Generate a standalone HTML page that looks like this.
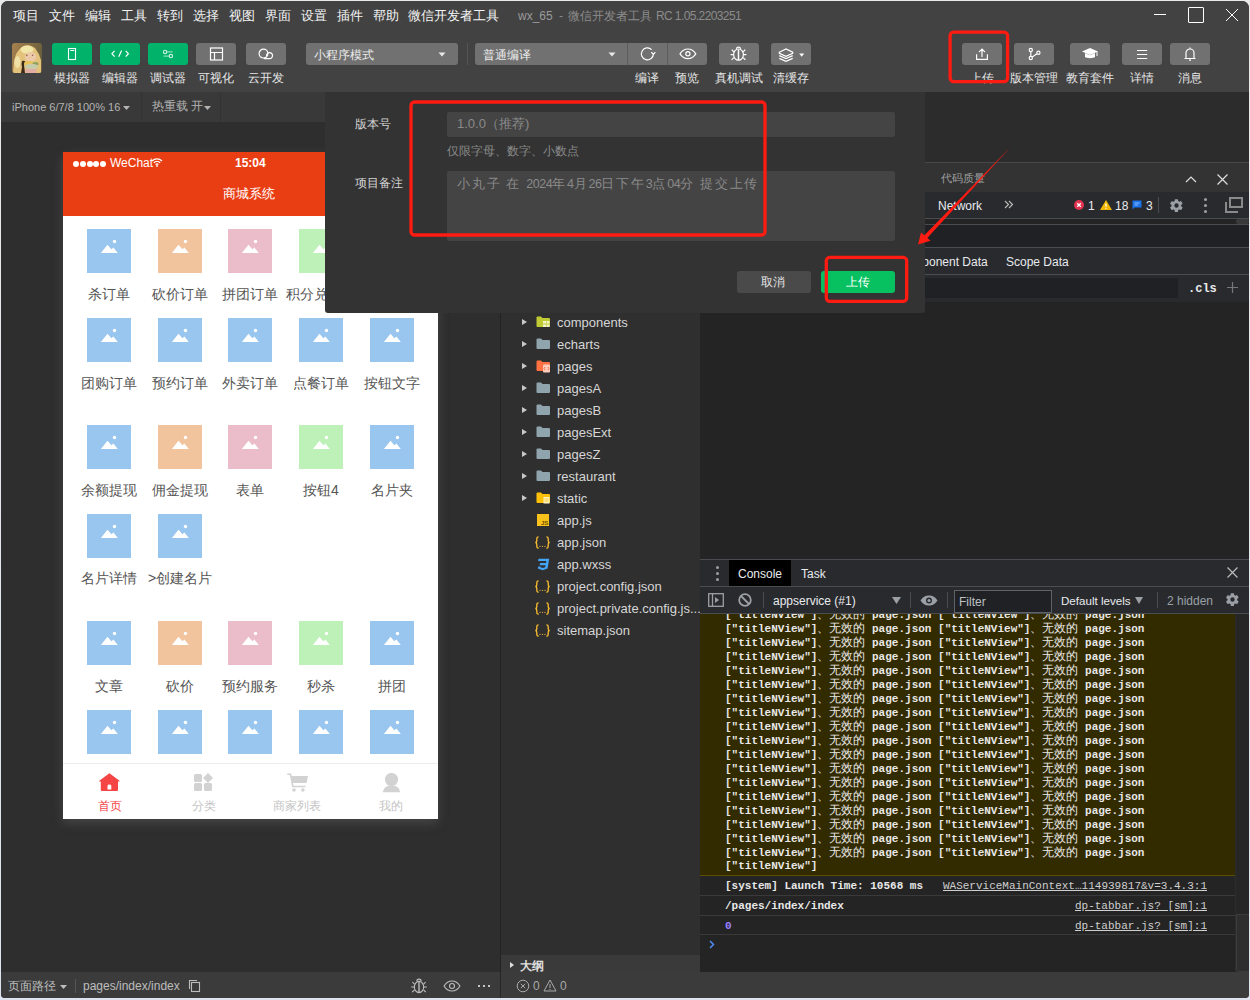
<!DOCTYPE html><html><head><meta charset="utf-8"><style>
*{box-sizing:border-box;margin:0;padding:0}
html,body{width:1250px;height:1000px;overflow:hidden;background:linear-gradient(#e9e9ea,#dde4ef);font-family:"Liberation Sans",sans-serif;}
#win{position:absolute;left:0;top:0;width:1250px;height:1000px;clip-path:inset(1px 1px 2px 1px round 7px 7px 4px 4px);background:#2e2e2e}
#win div,#win span,#win svg{position:absolute}
.t{white-space:nowrap;line-height:1}
.menu{font-size:13px;color:#f4f4f4;top:9px}
.tb{top:43px;height:22px;width:40px;border-radius:3px;background:#717171}
.tb.g{background:#01b26a}
.tb svg{left:0;top:0}
.lbl{top:71px;font-size:12px;color:#e6e6e6;white-space:nowrap;line-height:14px;text-align:center;width:80px}
.mono{font-family:"Liberation Mono",monospace}
.ic{width:44px;height:44px}
.ic svg{left:0;top:0}
.pl{font-size:14px;color:#555;width:90px;text-align:center;line-height:16px;white-space:nowrap}
.dl{font-size:12px;color:#e8eaed}
.sep{background:#494c50}
.ml{font-size:11px;font-weight:bold;color:#e8e8e8}
.cj{position:static!important;font-size:12px;font-weight:normal}
.cq{position:static!important;font-size:13px;letter-spacing:1.8px}
</style></head><body><div id="win">
<div style="left:0;top:0;width:1249px;height:92px;background:#424242"></div>
<div style="left:0;top:92px;width:500px;height:30px;background:#393939"></div>
<div style="left:141px;top:92px;width:1px;height:30px;background:#333"></div>
<div style="left:220px;top:92px;width:1px;height:30px;background:#333"></div>
<div style="left:0;top:122px;width:500px;height:850px;background:#2e2e2e"></div>
<div style="left:500px;top:92px;width:1px;height:906px;background:#232323"></div>
<div style="left:501px;top:92px;width:199px;height:880px;background:#2f2f2f"></div>
<div style="left:700px;top:92px;width:549px;height:880px;background:#242424"></div>
<div style="left:925px;top:92px;width:324px;height:70px;background:#2c2c2c"></div>
<div style="left:0;top:972px;width:1249px;height:26px;background:#3b3b3b"></div>
<div style="left:500px;top:972px;width:1px;height:26px;background:#262626"></div>
<span class="t menu" style="left:13px">项目</span>
<span class="t menu" style="left:49px">文件</span>
<span class="t menu" style="left:85px">编辑</span>
<span class="t menu" style="left:121px">工具</span>
<span class="t menu" style="left:157px">转到</span>
<span class="t menu" style="left:193px">选择</span>
<span class="t menu" style="left:229px">视图</span>
<span class="t menu" style="left:265px">界面</span>
<span class="t menu" style="left:301px">设置</span>
<span class="t menu" style="left:337px">插件</span>
<span class="t menu" style="left:373px">帮助</span>
<span class="t menu" style="left:408px">微信开发者工具</span>
<span class="t" style="left:518px;top:10px;font-size:12px;color:#9a9a9a">wx_65</span>
<span class="t" style="left:559px;top:10px;font-size:12px;color:#8c8c8c">-</span>
<span class="t" style="left:568px;top:10px;font-size:12px;color:#8c8c8c">微信开发者工具</span>
<span class="t" style="left:656px;top:10px;font-size:12px;letter-spacing:-0.6px;color:#8c8c8c">RC 1.05.2203251</span>
<div style="left:1154px;top:14px;width:12px;height:1px;background:#fff"></div>
<div style="left:1188px;top:7px;width:16px;height:16px;border:1.5px solid #fff;border-radius:1px"></div>
<svg style="left:1225px;top:8px" width="14" height="14" viewBox="0 0 14 14"><path d="M1 1L13 13M13 1L1 13" stroke="#fff" stroke-width="1"/></svg>
<svg style="left:12px;top:43px" width="30" height="30" viewBox="0 0 30 30"><defs><clipPath id="av"><rect width="30" height="30" rx="3"/></clipPath><linearGradient id="avbg" x1="0" y1="0" x2="1" y2="0.3"><stop offset="0" stop-color="#a8814f"/><stop offset="1" stop-color="#6a5f3c"/></linearGradient></defs><g clip-path="url(#av)"><rect width="30" height="30" fill="url(#avbg)"/><path d="M2 18Q4 8 10 4Q17 0 23 5Q27 10 29 17V30H1Z" fill="#e3c27c"/><ellipse cx="15" cy="6.5" rx="6.5" ry="4" fill="#f2e5a8"/><ellipse cx="5.5" cy="19" rx="3" ry="6" fill="#efe0a6"/><ellipse cx="18.5" cy="14" rx="5.8" ry="5" fill="#eccaa8"/><circle cx="14.8" cy="12.4" r="0.8" fill="#9a5d52"/><circle cx="20.6" cy="12.2" r="0.8" fill="#9a5d52"/><path d="M10 18Q13 17 14 20Q12 19 12 22L13 30H9L10 24Q9 21 10 18Z" fill="#3b2a1a"/><ellipse cx="17" cy="20.3" rx="4.8" ry="2.3" fill="#e8c35a"/><ellipse cx="23.5" cy="20.8" rx="3" ry="1.8" fill="#8ea15c"/><ellipse cx="19.5" cy="23.6" rx="6.5" ry="2.8" fill="#c6cca9"/><path d="M13 26H25L24 30H14Z" fill="#e1aca2"/></g></svg>
<div class="tb g" style="left:52px"><svg width="40" height="22" viewBox="0 0 40 22"><rect x="16.5" y="5.5" width="7" height="11" stroke="#fff" stroke-width="1.1" fill="none"/><path d="M18.3 7.5H22.3" stroke="#fff" stroke-width="1"/></svg></div>
<span class="lbl" style="left:32px">模拟器</span>
<div class="tb g" style="left:100px"><svg width="40" height="22" viewBox="0 0 40 22"><path d="M14.6 7.8L11.9 10.7L14.6 13.6M25.7 7.8L28.4 10.7L25.7 13.6M21.6 7.6L18.7 13.8" stroke="#fff" fill="none" stroke-width="1.2"/></svg></div>
<span class="lbl" style="left:80px">编辑器</span>
<div class="tb g" style="left:148px"><svg width="40" height="22" viewBox="0 0 40 22"><path d="M19 8.9H24.6M15.5 13.1H21" stroke="#fff" stroke-opacity=".55" stroke-width="1.3"/><circle cx="17.1" cy="8.9" r="1.7" stroke="#fff" stroke-opacity=".8" stroke-width="1.1" fill="none"/><circle cx="22.9" cy="13.1" r="1.7" stroke="#fff" stroke-opacity=".8" stroke-width="1.1" fill="none"/></svg></div>
<span class="lbl" style="left:128px">调试器</span>
<div class="tb " style="left:196px"><svg width="40" height="22" viewBox="0 0 40 22"><rect x="14.5" y="5" width="12" height="12" stroke="#fff" fill="none" stroke-width="1.2"/><path d="M14.5 9.5H26.5M18.5 9.5V17" stroke="#fff" fill="none" stroke-width="1.2"/></svg></div>
<span class="lbl" style="left:176px">可视化</span>
<div class="tb " style="left:246px"><svg width="40" height="22" viewBox="0 0 40 22"><circle cx="17.5" cy="10.6" r="4.4" stroke="#fff" fill="none" stroke-width="1.2"/><path d="M20.6 13.2A3 3 0 1 1 23 15.6H17.8" stroke="#fff" fill="none" stroke-width="1.2"/></svg></div>
<span class="lbl" style="left:226px">云开发</span>
<div style="left:306px;top:43px;width:152px;height:22px;border-radius:3px;background:#717171"></div>
<span class="t" style="left:314px;top:49px;font-size:12px;color:#ececec">小程序模式</span>
<svg style="left:438px;top:52px" width="8" height="5" viewBox="0 0 8 5"><path d="M0.5 0.5H7.5L4 4.5Z" fill="#e8e8e8"/></svg>
<div style="left:467px;top:43px;width:1px;height:22px;background:#555"></div>
<div style="left:475px;top:43px;width:232px;height:22px;border-radius:3px;background:#717171"></div>
<div style="left:627px;top:43px;width:1px;height:22px;background:#5c5c5c"></div>
<div style="left:667px;top:43px;width:1px;height:22px;background:#5c5c5c"></div>
<span class="t" style="left:483px;top:49px;font-size:12.2px;color:#ececec">普通编译</span>
<svg style="left:608px;top:52px" width="8" height="5" viewBox="0 0 8 5"><path d="M0.5 0.5H7.5L4 4.5Z" fill="#e8e8e8"/></svg>
<svg style="left:627px;top:43px" width="40" height="22" viewBox="0 0 40 22"><path d="M24.6 6.6A6 6 0 1 0 26.4 10.8" stroke="#fff" fill="none" stroke-width="1.2"/><path d="M24.3 9.3L26.4 11.3L28.3 9.1" stroke="#fff" fill="none" stroke-width="1.2"/></svg>
<svg style="left:667px;top:43px" width="40" height="22" viewBox="0 0 40 22"><path d="M13 10.8C15.2 7.4 18 6 20.9 6S26.6 7.4 28.8 10.8C26.6 14.2 23.8 15.6 20.9 15.6S15.2 14.2 13 10.8Z" stroke="#fff" fill="none" stroke-width="1.2"/><circle cx="20.9" cy="10.8" r="2.1" stroke="#fff" fill="none" stroke-width="1.2"/></svg>
<div class="tb" style="left:719px"><svg width="40" height="22" viewBox="0 0 40 22"><ellipse cx="19.5" cy="11.6" rx="4.9" ry="5.6" stroke="#fff" fill="none" stroke-width="1.2"/><path d="M17.3 5.8A2.3 2.3 0 0 1 21.7 5.8" stroke="#fff" fill="none" stroke-width="1.2"/><path d="M19.5 6.5V17.2" stroke="#fff" stroke-width="1.5"/><path d="M14.8 8.8L12.8 6.6M14.6 11.6H11.6M14.8 14.6L12.6 16.8M24.2 8.8L26.2 6.6M24.4 11.6H27.4M24.2 14.6L26.4 16.8" stroke="#fff" fill="none" stroke-width="1.2"/></svg></div>
<div class="tb" style="left:771px"><svg width="40" height="22" viewBox="0 0 40 22"><path d="M8.3 9.2L15 6L21.7 9.2V10.3L15 13.3L8.3 10.3Z" stroke="#fff" fill="none" stroke-width="1.2"/><path d="M8.3 12.6L15 15.6L21.7 12.6M8.3 15.4L15 18.4L21.7 15.4" stroke="#fff" fill="none" stroke-width="1.2"/><path d="M28.2 10.6H33.2L30.7 13.8Z" fill="#fff"/></svg></div>
<span class="lbl" style="left:607px">编译</span>
<span class="lbl" style="left:647px">预览</span>
<span class="lbl" style="left:699px">真机调试</span>
<span class="lbl" style="left:751px">清缓存</span>
<div class="tb" style="left:962px"><svg width="40" height="22" viewBox="0 0 40 22"><path d="M14.6 11.3V16.4H25.4V11.3M20 13.9V6.2M17 9.2L20 6.2L23 9.2" stroke="#fff" fill="none" stroke-width="1.2"/></svg></div>
<span class="lbl" style="left:942px">上传</span>
<div class="tb" style="left:1014px"><svg width="40" height="22" viewBox="0 0 40 22"><circle cx="16.8" cy="7" r="1.6" stroke="#fff" fill="none" stroke-width="1.2"/><circle cx="16.8" cy="15" r="1.6" stroke="#fff" fill="none" stroke-width="1.2"/><circle cx="24.4" cy="9.8" r="1.6" stroke="#fff" fill="none" stroke-width="1.2"/><path d="M16.8 8.6V13.4M23 10.7L18.2 14.1" stroke="#fff" fill="none" stroke-width="1.2"/></svg></div>
<span class="lbl" style="left:994px">版本管理</span>
<div class="tb" style="left:1070px"><svg width="40" height="22" viewBox="0 0 40 22"><path d="M20 5L28 8.5L20 12L12 8.5Z" fill="#fff"/><path d="M15 10V14C16.5 15.5 23.5 15.5 25 14V10L20 12.2Z" fill="#fff"/><path d="M27 9V13" stroke="#fff" stroke-width="1"/></svg></div>
<span class="lbl" style="left:1050px">教育套件</span>
<div class="tb" style="left:1122px"><svg width="40" height="22" viewBox="0 0 40 22"><path d="M15 7.5H25.2M15 11.5H25.2M15 15.5H25.2" stroke="#fff" stroke-width="1.1" fill="none"/></svg></div>
<span class="lbl" style="left:1102px">详情</span>
<div class="tb" style="left:1170px"><svg width="40" height="22" viewBox="0 0 40 22"><path d="M16 15V10A4 4 0 0 1 24 10V15M14.5 15.5H25.5" stroke="#fff" fill="none" stroke-width="1.2"/><path d="M19 17.2H21" stroke="#fff" fill="none" stroke-width="1.2"/><path d="M20 4.5V5.8" stroke="#fff" fill="none" stroke-width="1.2"/></svg></div>
<span class="lbl" style="left:1150px">消息</span>
<span class="t" style="left:12px;top:102px;font-size:11px;color:#b4b4b4">iPhone 6/7/8 100% 16</span>
<svg style="left:123px;top:106px" width="7" height="4" viewBox="0 0 7 4"><path d="M0 0H7L3.5 4Z" fill="#b4b4b4"/></svg>
<span class="t" style="left:152px;top:101px;font-size:11.5px;color:#b4b4b4">热重载 开</span>
<svg style="left:204px;top:106px" width="7" height="4" viewBox="0 0 7 4"><path d="M0 0H7L3.5 4Z" fill="#b4b4b4"/></svg>
<div style="left:63px;top:152px;width:375px;height:667px;background:#fff;box-shadow:0 4px 10px 0 rgba(110,110,110,.38)"></div>
<div style="left:63px;top:152px;width:375px;height:64px;background:#e93e14"></div>
<div style="left:73.0px;top:160.5px;width:6px;height:6px;border-radius:3px;background:#fff"></div>
<div style="left:79.8px;top:160.5px;width:6px;height:6px;border-radius:3px;background:#fff"></div>
<div style="left:86.6px;top:160.5px;width:6px;height:6px;border-radius:3px;background:#fff"></div>
<div style="left:93.4px;top:160.5px;width:6px;height:6px;border-radius:3px;background:#fff"></div>
<div style="left:100.2px;top:160.5px;width:6px;height:6px;border-radius:3px;background:#fff"></div>
<span class="t" style="left:110px;top:157px;font-size:12px;color:#fff">WeChat</span>
<svg style="left:151px;top:157px" width="12" height="10" viewBox="0 0 12 10"><path d="M1 4A7 7 0 0 1 11 4M2.8 5.8A4.5 4.5 0 0 1 9.2 5.8M4.6 7.6A2 2 0 0 1 7.4 7.6" stroke="#fff" stroke-width="1.3" fill="none"/><circle cx="6" cy="9" r="0.9" fill="#fff"/></svg>
<span class="t" style="left:235px;top:157px;font-size:12px;color:#fff;font-weight:bold">15:04</span>
<span class="t" style="left:223px;top:187px;font-size:13px;color:#fff">商城系统</span>
<div class="ic" style="left:87px;top:229px;background:#99c6ef"><svg width="44" height="44" viewBox="0 0 44 44"><path d="M13.9 24L20.5 15.8L24.4 20.2L26.4 18.5L30.8 24Z" fill="#fff"/><circle cx="27.5" cy="12.5" r="1.7" fill="#fff"/></svg></div>
<div class="ic" style="left:158px;top:229px;background:#f2c49d"><svg width="44" height="44" viewBox="0 0 44 44"><path d="M13.9 24L20.5 15.8L24.4 20.2L26.4 18.5L30.8 24Z" fill="#fff"/><circle cx="27.5" cy="12.5" r="1.7" fill="#fff"/></svg></div>
<div class="ic" style="left:228px;top:229px;background:#ebbcca"><svg width="44" height="44" viewBox="0 0 44 44"><path d="M13.9 24L20.5 15.8L24.4 20.2L26.4 18.5L30.8 24Z" fill="#fff"/><circle cx="27.5" cy="12.5" r="1.7" fill="#fff"/></svg></div>
<div class="ic" style="left:299px;top:229px;background:#bdf1b8"><svg width="44" height="44" viewBox="0 0 44 44"><path d="M13.9 24L20.5 15.8L24.4 20.2L26.4 18.5L30.8 24Z" fill="#fff"/><circle cx="27.5" cy="12.5" r="1.7" fill="#fff"/></svg></div>
<div class="ic" style="left:370px;top:229px;background:#99c6ef"><svg width="44" height="44" viewBox="0 0 44 44"><path d="M13.9 24L20.5 15.8L24.4 20.2L26.4 18.5L30.8 24Z" fill="#fff"/><circle cx="27.5" cy="12.5" r="1.7" fill="#fff"/></svg></div>
<span class="pl" style="left:64px;top:286px">杀订单</span>
<span class="pl" style="left:135px;top:286px">砍价订单</span>
<span class="pl" style="left:205px;top:286px">拼团订单</span>
<span class="pl" style="left:276px;top:286px">积分兑换单</span>
<div class="ic" style="left:87px;top:318px;background:#99c6ef"><svg width="44" height="44" viewBox="0 0 44 44"><path d="M13.9 24L20.5 15.8L24.4 20.2L26.4 18.5L30.8 24Z" fill="#fff"/><circle cx="27.5" cy="12.5" r="1.7" fill="#fff"/></svg></div>
<div class="ic" style="left:158px;top:318px;background:#99c6ef"><svg width="44" height="44" viewBox="0 0 44 44"><path d="M13.9 24L20.5 15.8L24.4 20.2L26.4 18.5L30.8 24Z" fill="#fff"/><circle cx="27.5" cy="12.5" r="1.7" fill="#fff"/></svg></div>
<div class="ic" style="left:228px;top:318px;background:#99c6ef"><svg width="44" height="44" viewBox="0 0 44 44"><path d="M13.9 24L20.5 15.8L24.4 20.2L26.4 18.5L30.8 24Z" fill="#fff"/><circle cx="27.5" cy="12.5" r="1.7" fill="#fff"/></svg></div>
<div class="ic" style="left:299px;top:318px;background:#99c6ef"><svg width="44" height="44" viewBox="0 0 44 44"><path d="M13.9 24L20.5 15.8L24.4 20.2L26.4 18.5L30.8 24Z" fill="#fff"/><circle cx="27.5" cy="12.5" r="1.7" fill="#fff"/></svg></div>
<div class="ic" style="left:370px;top:318px;background:#99c6ef"><svg width="44" height="44" viewBox="0 0 44 44"><path d="M13.9 24L20.5 15.8L24.4 20.2L26.4 18.5L30.8 24Z" fill="#fff"/><circle cx="27.5" cy="12.5" r="1.7" fill="#fff"/></svg></div>
<span class="pl" style="left:64px;top:375px">团购订单</span>
<span class="pl" style="left:135px;top:375px">预约订单</span>
<span class="pl" style="left:205px;top:375px">外卖订单</span>
<span class="pl" style="left:276px;top:375px">点餐订单</span>
<span class="pl" style="left:347px;top:375px">按钮文字</span>
<div class="ic" style="left:87px;top:425px;background:#99c6ef"><svg width="44" height="44" viewBox="0 0 44 44"><path d="M13.9 24L20.5 15.8L24.4 20.2L26.4 18.5L30.8 24Z" fill="#fff"/><circle cx="27.5" cy="12.5" r="1.7" fill="#fff"/></svg></div>
<div class="ic" style="left:158px;top:425px;background:#f2c49d"><svg width="44" height="44" viewBox="0 0 44 44"><path d="M13.9 24L20.5 15.8L24.4 20.2L26.4 18.5L30.8 24Z" fill="#fff"/><circle cx="27.5" cy="12.5" r="1.7" fill="#fff"/></svg></div>
<div class="ic" style="left:228px;top:425px;background:#ebbcca"><svg width="44" height="44" viewBox="0 0 44 44"><path d="M13.9 24L20.5 15.8L24.4 20.2L26.4 18.5L30.8 24Z" fill="#fff"/><circle cx="27.5" cy="12.5" r="1.7" fill="#fff"/></svg></div>
<div class="ic" style="left:299px;top:425px;background:#bdf1b8"><svg width="44" height="44" viewBox="0 0 44 44"><path d="M13.9 24L20.5 15.8L24.4 20.2L26.4 18.5L30.8 24Z" fill="#fff"/><circle cx="27.5" cy="12.5" r="1.7" fill="#fff"/></svg></div>
<div class="ic" style="left:370px;top:425px;background:#99c6ef"><svg width="44" height="44" viewBox="0 0 44 44"><path d="M13.9 24L20.5 15.8L24.4 20.2L26.4 18.5L30.8 24Z" fill="#fff"/><circle cx="27.5" cy="12.5" r="1.7" fill="#fff"/></svg></div>
<span class="pl" style="left:64px;top:482px">余额提现</span>
<span class="pl" style="left:135px;top:482px">佣金提现</span>
<span class="pl" style="left:205px;top:482px">表单</span>
<span class="pl" style="left:276px;top:482px">按钮4</span>
<span class="pl" style="left:347px;top:482px">名片夹</span>
<div class="ic" style="left:87px;top:514px;background:#99c6ef"><svg width="44" height="44" viewBox="0 0 44 44"><path d="M13.9 24L20.5 15.8L24.4 20.2L26.4 18.5L30.8 24Z" fill="#fff"/><circle cx="27.5" cy="12.5" r="1.7" fill="#fff"/></svg></div>
<div class="ic" style="left:158px;top:514px;background:#99c6ef"><svg width="44" height="44" viewBox="0 0 44 44"><path d="M13.9 24L20.5 15.8L24.4 20.2L26.4 18.5L30.8 24Z" fill="#fff"/><circle cx="27.5" cy="12.5" r="1.7" fill="#fff"/></svg></div>
<span class="pl" style="left:64px;top:570px">名片详情</span>
<span class="pl" style="left:135px;top:570px">>创建名片</span>
<div class="ic" style="left:87px;top:621px;background:#99c6ef"><svg width="44" height="44" viewBox="0 0 44 44"><path d="M13.9 24L20.5 15.8L24.4 20.2L26.4 18.5L30.8 24Z" fill="#fff"/><circle cx="27.5" cy="12.5" r="1.7" fill="#fff"/></svg></div>
<div class="ic" style="left:158px;top:621px;background:#f2c49d"><svg width="44" height="44" viewBox="0 0 44 44"><path d="M13.9 24L20.5 15.8L24.4 20.2L26.4 18.5L30.8 24Z" fill="#fff"/><circle cx="27.5" cy="12.5" r="1.7" fill="#fff"/></svg></div>
<div class="ic" style="left:228px;top:621px;background:#ebbcca"><svg width="44" height="44" viewBox="0 0 44 44"><path d="M13.9 24L20.5 15.8L24.4 20.2L26.4 18.5L30.8 24Z" fill="#fff"/><circle cx="27.5" cy="12.5" r="1.7" fill="#fff"/></svg></div>
<div class="ic" style="left:299px;top:621px;background:#bdf1b8"><svg width="44" height="44" viewBox="0 0 44 44"><path d="M13.9 24L20.5 15.8L24.4 20.2L26.4 18.5L30.8 24Z" fill="#fff"/><circle cx="27.5" cy="12.5" r="1.7" fill="#fff"/></svg></div>
<div class="ic" style="left:370px;top:621px;background:#99c6ef"><svg width="44" height="44" viewBox="0 0 44 44"><path d="M13.9 24L20.5 15.8L24.4 20.2L26.4 18.5L30.8 24Z" fill="#fff"/><circle cx="27.5" cy="12.5" r="1.7" fill="#fff"/></svg></div>
<span class="pl" style="left:64px;top:678px">文章</span>
<span class="pl" style="left:135px;top:678px">砍价</span>
<span class="pl" style="left:205px;top:678px">预约服务</span>
<span class="pl" style="left:276px;top:678px">秒杀</span>
<span class="pl" style="left:347px;top:678px">拼团</span>
<div class="ic" style="left:87px;top:710px;background:#99c6ef"><svg width="44" height="44" viewBox="0 0 44 44"><path d="M13.9 24L20.5 15.8L24.4 20.2L26.4 18.5L30.8 24Z" fill="#fff"/><circle cx="27.5" cy="12.5" r="1.7" fill="#fff"/></svg></div>
<div class="ic" style="left:158px;top:710px;background:#99c6ef"><svg width="44" height="44" viewBox="0 0 44 44"><path d="M13.9 24L20.5 15.8L24.4 20.2L26.4 18.5L30.8 24Z" fill="#fff"/><circle cx="27.5" cy="12.5" r="1.7" fill="#fff"/></svg></div>
<div class="ic" style="left:228px;top:710px;background:#99c6ef"><svg width="44" height="44" viewBox="0 0 44 44"><path d="M13.9 24L20.5 15.8L24.4 20.2L26.4 18.5L30.8 24Z" fill="#fff"/><circle cx="27.5" cy="12.5" r="1.7" fill="#fff"/></svg></div>
<div class="ic" style="left:299px;top:710px;background:#99c6ef"><svg width="44" height="44" viewBox="0 0 44 44"><path d="M13.9 24L20.5 15.8L24.4 20.2L26.4 18.5L30.8 24Z" fill="#fff"/><circle cx="27.5" cy="12.5" r="1.7" fill="#fff"/></svg></div>
<div class="ic" style="left:370px;top:710px;background:#99c6ef"><svg width="44" height="44" viewBox="0 0 44 44"><path d="M13.9 24L20.5 15.8L24.4 20.2L26.4 18.5L30.8 24Z" fill="#fff"/><circle cx="27.5" cy="12.5" r="1.7" fill="#fff"/></svg></div>
<div style="left:63px;top:763px;width:375px;height:1px;background:#ececec"></div>
<span class="t" style="left:70px;top:800px;width:80px;text-align:center;font-size:12px;color:#f54545">首页</span>
<svg style="left:99px;top:773px" width="22" height="20" viewBox="0 0 22 20"><path d="M10.4 0.3L20.5 7.8Q20.9 8.4 20.2 8.6H19V17Q19 18 18 18H2.8Q1.8 18 1.8 17V8.6H0.6Q-0.1 8.4 0.3 7.8Z" fill="#f54545"/><path d="M8.5 16.6V13Q8.5 11.6 10.4 11.6Q12.3 11.6 12.3 13V16.6Z" fill="#fff"/></svg>
<span class="t" style="left:164px;top:800px;width:80px;text-align:center;font-size:12px;color:#c4c4c4">分类</span>
<svg style="left:194px;top:773px" width="22" height="20" viewBox="0 0 22 20"><rect x="0" y="1" width="8" height="8" rx="1.5" fill="#d2d2d2"/><rect x="0" y="10" width="8" height="8" rx="1.5" fill="#d2d2d2"/><rect x="10" y="10" width="8" height="8" rx="1.5" fill="#d2d2d2"/><path d="M14 0L19 5L14 10L9 5Z" fill="#d2d2d2"/></svg>
<span class="t" style="left:257px;top:800px;width:80px;text-align:center;font-size:12px;color:#c4c4c4">商家列表</span>
<svg style="left:287px;top:773px" width="22" height="20" viewBox="0 0 22 20"><path d="M0.3 1.3H3.6L5.8 13.5H18.5" stroke="#d2d2d2" stroke-width="1.6" fill="none"/><path d="M3.6 3.1H21L19.6 10.1H4.9Z" fill="#d2d2d2"/><circle cx="7" cy="17" r="1.8" fill="#d2d2d2"/><circle cx="15.9" cy="17" r="1.8" fill="#d2d2d2"/></svg>
<span class="t" style="left:351px;top:800px;width:80px;text-align:center;font-size:12px;color:#c4c4c4">我的</span>
<svg style="left:382px;top:773px" width="22" height="20" viewBox="0 0 22 20"><circle cx="9.5" cy="6.5" r="6.6" fill="#d2d2d2"/><path d="M0.8 19.2Q1.5 12.4 9.5 12.4Q17.5 12.4 18.2 19.2Z" fill="#d2d2d2"/></svg>
<span class="t" style="left:8px;top:980px;font-size:12px;color:#bdbdbd">页面路径</span>
<svg style="left:60px;top:985px" width="7" height="4" viewBox="0 0 7 4"><path d="M0 0H7L3.5 4Z" fill="#bdbdbd"/></svg>
<div style="left:75px;top:979px;width:1px;height:14px;background:#555"></div>
<span class="t" style="left:83px;top:980px;font-size:12px;color:#bdbdbd">pages/index/index</span>
<svg style="left:186px;top:978px" width="16" height="16" viewBox="0 0 16 16"><rect x="5.5" y="4.5" width="8" height="9" stroke="#bdbdbd" fill="none" stroke-width="1.1"/><path d="M3.5 11V2.5H11" stroke="#bdbdbd" fill="none" stroke-width="1.1"/></svg>
<svg style="left:409px;top:976px" width="20" height="20" viewBox="0 0 20 20"><ellipse cx="10" cy="11" rx="4.7" ry="5.6" stroke="#bdbdbd" fill="none" stroke-width="1.1"/><path d="M7.8 5.3A2.2 2.2 0 0 1 12.2 5.3" stroke="#bdbdbd" fill="none" stroke-width="1.1"/><path d="M10 6V16.6" stroke="#bdbdbd" stroke-width="1.4"/><path d="M5.4 8.2L3.4 6M5.2 11H2.2M5.4 14L3.2 16.2M14.6 8.2L16.6 6M14.8 11H17.8M14.6 14L16.8 16.2" stroke="#bdbdbd" fill="none" stroke-width="1.1"/></svg>
<svg style="left:443px;top:980px" width="18" height="12" viewBox="0 0 18 12"><path d="M1 6C3.5 2 6.5 1 9 1S14.5 2 17 6C14.5 10 11.5 11 9 11S3.5 10 1 6Z" stroke="#bdbdbd" fill="none" stroke-width="1.1"/><circle cx="9" cy="6" r="2.5" stroke="#bdbdbd" fill="none" stroke-width="1.1"/></svg>
<div style="left:478px;top:985px;width:2px;height:2px;background:#c4c4c4"></div>
<div style="left:483px;top:985px;width:2px;height:2px;background:#c4c4c4"></div>
<div style="left:488px;top:985px;width:2px;height:2px;background:#c4c4c4"></div>
<svg style="left:522px;top:319px" width="5" height="6" viewBox="0 0 5 6"><path d="M0 0L5 3L0 6Z" fill="#c8c8c8"/></svg>
<svg style="left:536px;top:316px" width="15" height="13" viewBox="0 0 15 13"><path d="M0.5 1.5Q0.5 0.5 1.5 0.5H5L6.5 2H13Q14 2 14 3V10Q14 11 13 11H1.5Q0.5 11 0.5 10Z" fill="#c0ca33"/><rect x="7" y="5" width="3" height="2.5" fill="#f0f4c3"/><rect x="10.5" y="5" width="3" height="2.5" fill="#f0f4c3"/><rect x="7" y="8.5" width="3" height="2.5" fill="#f0f4c3"/><rect x="10.5" y="8.5" width="3" height="2.5" fill="#f0f4c3"/></svg>
<span class="t" style="left:557px;top:316px;font-size:13px;color:#d6d6d6">components</span>
<svg style="left:522px;top:341px" width="5" height="6" viewBox="0 0 5 6"><path d="M0 0L5 3L0 6Z" fill="#c8c8c8"/></svg>
<svg style="left:536px;top:338px" width="15" height="13" viewBox="0 0 15 13"><path d="M0.5 1.5Q0.5 0.5 1.5 0.5H5L6.5 2H13Q14 2 14 3V10Q14 11 13 11H1.5Q0.5 11 0.5 10Z" fill="#90a4ae"/></svg>
<span class="t" style="left:557px;top:338px;font-size:13px;color:#d6d6d6">echarts</span>
<svg style="left:522px;top:363px" width="5" height="6" viewBox="0 0 5 6"><path d="M0 0L5 3L0 6Z" fill="#c8c8c8"/></svg>
<svg style="left:536px;top:360px" width="15" height="13" viewBox="0 0 15 13"><path d="M0.5 1.5Q0.5 0.5 1.5 0.5H5L6.5 2H13Q14 2 14 3V10Q14 11 13 11H1.5Q0.5 11 0.5 10Z" fill="#ff7043"/><rect x="7" y="4.5" width="7" height="8" rx="1" fill="#ffccbc"/><path d="M9 7L8 8.5L9 10M12 7L13 8.5L12 10" stroke="#ff5722" stroke-width="0.8" fill="none"/></svg>
<span class="t" style="left:557px;top:360px;font-size:13px;color:#d6d6d6">pages</span>
<svg style="left:522px;top:385px" width="5" height="6" viewBox="0 0 5 6"><path d="M0 0L5 3L0 6Z" fill="#c8c8c8"/></svg>
<svg style="left:536px;top:382px" width="15" height="13" viewBox="0 0 15 13"><path d="M0.5 1.5Q0.5 0.5 1.5 0.5H5L6.5 2H13Q14 2 14 3V10Q14 11 13 11H1.5Q0.5 11 0.5 10Z" fill="#90a4ae"/></svg>
<span class="t" style="left:557px;top:382px;font-size:13px;color:#d6d6d6">pagesA</span>
<svg style="left:522px;top:407px" width="5" height="6" viewBox="0 0 5 6"><path d="M0 0L5 3L0 6Z" fill="#c8c8c8"/></svg>
<svg style="left:536px;top:404px" width="15" height="13" viewBox="0 0 15 13"><path d="M0.5 1.5Q0.5 0.5 1.5 0.5H5L6.5 2H13Q14 2 14 3V10Q14 11 13 11H1.5Q0.5 11 0.5 10Z" fill="#90a4ae"/></svg>
<span class="t" style="left:557px;top:404px;font-size:13px;color:#d6d6d6">pagesB</span>
<svg style="left:522px;top:429px" width="5" height="6" viewBox="0 0 5 6"><path d="M0 0L5 3L0 6Z" fill="#c8c8c8"/></svg>
<svg style="left:536px;top:426px" width="15" height="13" viewBox="0 0 15 13"><path d="M0.5 1.5Q0.5 0.5 1.5 0.5H5L6.5 2H13Q14 2 14 3V10Q14 11 13 11H1.5Q0.5 11 0.5 10Z" fill="#90a4ae"/></svg>
<span class="t" style="left:557px;top:426px;font-size:13px;color:#d6d6d6">pagesExt</span>
<svg style="left:522px;top:451px" width="5" height="6" viewBox="0 0 5 6"><path d="M0 0L5 3L0 6Z" fill="#c8c8c8"/></svg>
<svg style="left:536px;top:448px" width="15" height="13" viewBox="0 0 15 13"><path d="M0.5 1.5Q0.5 0.5 1.5 0.5H5L6.5 2H13Q14 2 14 3V10Q14 11 13 11H1.5Q0.5 11 0.5 10Z" fill="#90a4ae"/></svg>
<span class="t" style="left:557px;top:448px;font-size:13px;color:#d6d6d6">pagesZ</span>
<svg style="left:522px;top:473px" width="5" height="6" viewBox="0 0 5 6"><path d="M0 0L5 3L0 6Z" fill="#c8c8c8"/></svg>
<svg style="left:536px;top:470px" width="15" height="13" viewBox="0 0 15 13"><path d="M0.5 1.5Q0.5 0.5 1.5 0.5H5L6.5 2H13Q14 2 14 3V10Q14 11 13 11H1.5Q0.5 11 0.5 10Z" fill="#90a4ae"/></svg>
<span class="t" style="left:557px;top:470px;font-size:13px;color:#d6d6d6">restaurant</span>
<svg style="left:522px;top:495px" width="5" height="6" viewBox="0 0 5 6"><path d="M0 0L5 3L0 6Z" fill="#c8c8c8"/></svg>
<svg style="left:536px;top:492px" width="15" height="13" viewBox="0 0 15 13"><path d="M0.5 1.5Q0.5 0.5 1.5 0.5H5L6.5 2H13Q14 2 14 3V10Q14 11 13 11H1.5Q0.5 11 0.5 10Z" fill="#ffc107"/><rect x="7.5" y="5" width="6" height="6.5" fill="#fff3c4"/><path d="M8.5 7H12.5M8.5 9H12.5" stroke="#ffc107" stroke-width="0.8"/></svg>
<span class="t" style="left:557px;top:492px;font-size:13px;color:#d6d6d6">static</span>
<svg style="left:536px;top:514px" width="15" height="13" viewBox="0 0 15 13"><rect x="1" y="0" width="12" height="12" fill="#f9c21b"/><text x="5" y="10.5" font-size="6" font-family="Liberation Sans" font-weight="bold" fill="#6b4e00">JS</text></svg>
<span class="t" style="left:557px;top:514px;font-size:13px;color:#d6d6d6">app.js</span>
<svg style="left:535px;top:536px" width="15" height="13" viewBox="0 0 15 13"><path d="M3.6 0.8Q1.8 0.8 1.8 2.6V4.8Q1.8 6.5 0.3 6.5Q1.8 6.5 1.8 8.2V10.4Q1.8 12.2 3.6 12.2M11.4 0.8Q13.2 0.8 13.2 2.6V4.8Q13.2 6.5 14.7 6.5Q13.2 6.5 13.2 8.2V10.4Q13.2 12.2 11.4 12.2" stroke="#f7bb2f" stroke-width="1.35" fill="none"/><circle cx="5" cy="10.3" r="0.65" fill="#f4b83f"/><circle cx="7.5" cy="10.3" r="0.65" fill="#f4b83f"/><circle cx="10" cy="10.3" r="0.65" fill="#f4b83f"/></svg>
<span class="t" style="left:557px;top:536px;font-size:13px;color:#d6d6d6">app.json</span>
<svg style="left:536px;top:558px" width="15" height="13" viewBox="0 0 15 13"><path d="M2.5 0.8H13.2L11.6 10.6L6.6 12.2L1.8 10.6L2.2 8.4H4.6L4.5 9.3L6.7 10L9.2 9.3L9.6 7.3H3.7L4.1 5.1H10L10.3 3H2.1Z" fill="#42a5f5"/></svg>
<span class="t" style="left:557px;top:558px;font-size:13px;color:#d6d6d6">app.wxss</span>
<svg style="left:535px;top:580px" width="15" height="13" viewBox="0 0 15 13"><path d="M3.6 0.8Q1.8 0.8 1.8 2.6V4.8Q1.8 6.5 0.3 6.5Q1.8 6.5 1.8 8.2V10.4Q1.8 12.2 3.6 12.2M11.4 0.8Q13.2 0.8 13.2 2.6V4.8Q13.2 6.5 14.7 6.5Q13.2 6.5 13.2 8.2V10.4Q13.2 12.2 11.4 12.2" stroke="#f7bb2f" stroke-width="1.35" fill="none"/><circle cx="5" cy="10.3" r="0.65" fill="#f4b83f"/><circle cx="7.5" cy="10.3" r="0.65" fill="#f4b83f"/><circle cx="10" cy="10.3" r="0.65" fill="#f4b83f"/></svg>
<span class="t" style="left:557px;top:580px;font-size:13px;color:#d6d6d6">project.config.json</span>
<svg style="left:535px;top:602px" width="15" height="13" viewBox="0 0 15 13"><path d="M3.6 0.8Q1.8 0.8 1.8 2.6V4.8Q1.8 6.5 0.3 6.5Q1.8 6.5 1.8 8.2V10.4Q1.8 12.2 3.6 12.2M11.4 0.8Q13.2 0.8 13.2 2.6V4.8Q13.2 6.5 14.7 6.5Q13.2 6.5 13.2 8.2V10.4Q13.2 12.2 11.4 12.2" stroke="#f7bb2f" stroke-width="1.35" fill="none"/><circle cx="5" cy="10.3" r="0.65" fill="#f4b83f"/><circle cx="7.5" cy="10.3" r="0.65" fill="#f4b83f"/><circle cx="10" cy="10.3" r="0.65" fill="#f4b83f"/></svg>
<span class="t" style="left:557px;top:602px;font-size:13px;color:#d6d6d6">project.private.config.js...</span>
<svg style="left:535px;top:624px" width="15" height="13" viewBox="0 0 15 13"><path d="M3.6 0.8Q1.8 0.8 1.8 2.6V4.8Q1.8 6.5 0.3 6.5Q1.8 6.5 1.8 8.2V10.4Q1.8 12.2 3.6 12.2M11.4 0.8Q13.2 0.8 13.2 2.6V4.8Q13.2 6.5 14.7 6.5Q13.2 6.5 13.2 8.2V10.4Q13.2 12.2 11.4 12.2" stroke="#f7bb2f" stroke-width="1.35" fill="none"/><circle cx="5" cy="10.3" r="0.65" fill="#f4b83f"/><circle cx="7.5" cy="10.3" r="0.65" fill="#f4b83f"/><circle cx="10" cy="10.3" r="0.65" fill="#f4b83f"/></svg>
<span class="t" style="left:557px;top:624px;font-size:13px;color:#d6d6d6">sitemap.json</span>
<div style="left:501px;top:955px;width:199px;height:17px;background:#3a3a3a"></div>
<svg style="left:510px;top:962px" width="4" height="6" viewBox="0 0 4 6"><path d="M0 0L4 3L0 6Z" fill="#ddd"/></svg>
<span class="t" style="left:520px;top:960px;font-size:12px;color:#e0e0e0;font-weight:bold">大纲</span>
<svg style="left:516px;top:979px" width="14" height="14" viewBox="0 0 14 14"><circle cx="7" cy="7" r="5.8" stroke="#aaa" fill="none" stroke-width="1"/><path d="M4.8 4.8L9.2 9.2M9.2 4.8L4.8 9.2" stroke="#aaa" fill="none" stroke-width="1"/></svg>
<span class="t" style="left:533px;top:980px;font-size:12px;color:#aaa">0</span>
<svg style="left:543px;top:979px" width="14" height="13" viewBox="0 0 14 13"><path d="M7 1L13 12H1Z" stroke="#aaa" fill="none" stroke-width="1"/><path d="M7 5V9M7 10V11" stroke="#aaa" fill="none" stroke-width="1"/></svg>
<span class="t" style="left:560px;top:980px;font-size:12px;color:#aaa">0</span>
<div style="left:925px;top:162px;width:324px;height:1px;background:#484848"></div>
<div style="left:925px;top:163px;width:324px;height:29px;background:#333"></div>
<span class="t" style="left:941px;top:173px;font-size:11px;color:#a0a0a0">代码质量</span>
<svg style="left:1185px;top:175px" width="12" height="8" viewBox="0 0 12 8"><path d="M1 7L6 2L11 7" stroke="#ddd" stroke-width="1.2" fill="none"/></svg>
<svg style="left:1217px;top:174px" width="11" height="11" viewBox="0 0 11 11"><path d="M0.5 0.5L10.5 10.5M10.5 0.5L0.5 10.5" stroke="#ddd" stroke-width="1.2"/></svg>
<div style="left:925px;top:192px;width:324px;height:26px;background:#292a2d"></div>
<span class="t dl" style="left:938px;top:200px">Network</span>
<svg style="left:1004px;top:200px" width="10" height="9" viewBox="0 0 10 9"><path d="M1 1L4.5 4.5L1 8M5 1L8.5 4.5L5 8" stroke="#bbb" stroke-width="1.1" fill="none"/></svg>
<svg style="left:1074px;top:200px" width="10" height="10" viewBox="0 0 10 10"><circle cx="5" cy="5" r="5" fill="#e0334f"/><path d="M3.2 3.2L6.8 6.8M6.8 3.2L3.2 6.8" stroke="#fff" stroke-width="1.3"/></svg>
<span class="t dl" style="left:1088px;top:200px">1</span>
<svg style="left:1100px;top:200px" width="12" height="10" viewBox="0 0 12 10"><path d="M6 0L12 10H0Z" fill="#f2b800"/><path d="M6 3.5V6.8M6 7.8V8.8" stroke="#fff" stroke-width="1.2"/></svg>
<span class="t dl" style="left:1115px;top:200px">18</span>
<svg style="left:1132px;top:200px" width="10" height="10" viewBox="0 0 10 10"><path d="M0.5 0.5H9.5V7.5H2.5L0.5 9.5Z" fill="#1a73e8"/><path d="M2.5 3H7.5M2.5 5H6" stroke="#9cc2ff" stroke-width="0.9"/></svg>
<span class="t dl" style="left:1146px;top:200px">3</span>
<div style="left:1158px;top:197px;width:1px;height:16px;background:#494c50"></div>
<svg style="left:1169px;top:198px" width="15" height="15" viewBox="0 0 24 24"><path fill="#9aa0a6" d="M19.4 13c.04-.32.06-.66.06-1s-.02-.68-.07-1l2.16-1.68a.5.5 0 0 0 .12-.64l-2.05-3.55a.5.5 0 0 0-.62-.22l-2.55 1.03a7.7 7.7 0 0 0-1.73-1L14.34 2.4a.5.5 0 0 0-.5-.4H9.74a.5.5 0 0 0-.5.42L8.86 5.14c-.63.26-1.2.6-1.73 1L4.58 5.1a.5.5 0 0 0-.62.22L1.9 8.87a.5.5 0 0 0 .12.64L4.18 11.2c-.05.32-.08.66-.08 1s.03.68.08 1l-2.16 1.68a.5.5 0 0 0-.12.64l2.05 3.55c.13.22.39.3.62.22l2.55-1.03c.53.4 1.1.74 1.73 1l.38 2.72c.05.24.26.42.5.42h4.1c.25 0 .46-.18.5-.42l.38-2.72c.63-.26 1.2-.6 1.73-1l2.55 1.03c.23.09.49 0 .62-.22l2.05-3.55a.5.5 0 0 0-.12-.64zM12 15.5A3.5 3.5 0 1 1 12 8.5a3.5 3.5 0 0 1 0 7z"/></svg>
<div style="left:1204px;top:197.5px;width:3px;height:3px;border-radius:2px;background:#9aa0a6"></div>
<div style="left:1204px;top:203.5px;width:3px;height:3px;border-radius:2px;background:#9aa0a6"></div>
<div style="left:1204px;top:209.5px;width:3px;height:3px;border-radius:2px;background:#9aa0a6"></div>
<svg style="left:1224px;top:197px" width="19" height="17" viewBox="0 0 19 17"><rect x="6" y="1" width="12" height="9" stroke="#8a8a8a" stroke-width="2" fill="none"/><path d="M2 5V15H14" stroke="#8a8a8a" stroke-width="2" fill="none"/></svg>
<div style="left:925px;top:218px;width:324px;height:1px;background:#494c50"></div>
<div style="left:925px;top:219px;width:324px;height:5px;background:#242424"></div>
<div style="left:1236px;top:219px;width:13px;height:5px;border-radius:2px;background:#3a3a3a"></div>
<div style="left:925px;top:224px;width:324px;height:1px;background:#494c50"></div>
<div style="left:925px;top:225px;width:324px;height:22px;background:#202124"></div>
<div style="left:925px;top:247px;width:324px;height:1px;background:#494c50"></div>
<div style="left:925px;top:248px;width:324px;height:26px;background:#292a2d"></div>
<span class="t dl" style="left:897px;top:256px">Component Data</span>
<span class="t dl" style="left:1006px;top:256px">Scope Data</span>
<div style="left:925px;top:274px;width:324px;height:1px;background:#494c50"></div>
<div style="left:925px;top:275px;width:324px;height:27px;background:#292a2d"></div>
<div style="left:925px;top:278px;width:253px;height:20px;background:#202124"></div>
<span class="t mono" style="left:1188px;top:283px;font-size:12px;color:#e8eaed;font-weight:bold">.cls</span>
<svg style="left:1227px;top:282px" width="11" height="11" viewBox="0 0 11 11"><path d="M5.5 0V11M0 5.5H11" stroke="#777" stroke-width="1.2"/></svg>
<div class="sep" style="left:700px;top:559px;width:549px;height:1px"></div>
<div style="left:700px;top:560px;width:549px;height:26px;background:#292a2d"></div>
<div style="left:715.5px;top:565.5px;width:3px;height:3px;border-radius:2px;background:#9aa0a6"></div>
<div style="left:715.5px;top:571.5px;width:3px;height:3px;border-radius:2px;background:#9aa0a6"></div>
<div style="left:715.5px;top:577.5px;width:3px;height:3px;border-radius:2px;background:#9aa0a6"></div>
<div style="left:729px;top:560px;width:62px;height:26px;background:#000"></div>
<span class="t dl" style="left:738px;top:568px">Console</span>
<span class="t dl" style="left:801px;top:568px">Task</span>
<svg style="left:1227px;top:567px" width="11" height="11" viewBox="0 0 11 11"><path d="M0.5 0.5L10.5 10.5M10.5 0.5L0.5 10.5" stroke="#bbb" stroke-width="1.2"/></svg>
<div class="sep" style="left:700px;top:586px;width:549px;height:1px"></div>
<div style="left:700px;top:587px;width:549px;height:27px;background:#292a2d"></div>
<svg style="left:708px;top:593px" width="16" height="14" viewBox="0 0 16 14"><rect x="0.7" y="0.7" width="14.6" height="12.6" stroke="#9aa0a6" fill="none" stroke-width="1.3"/><path d="M4.5 1V13" stroke="#9aa0a6" fill="none" stroke-width="1.3"/><path d="M7 4L11 7L7 10Z" fill="#9aa0a6"/></svg>
<svg style="left:738px;top:593px" width="14" height="14" viewBox="0 0 14 14"><circle cx="7" cy="7" r="5.8" stroke="#9aa0a6" stroke-width="1.8" fill="none"/><path d="M3 3L11 11" stroke="#9aa0a6" stroke-width="1.8"/></svg>
<div class="sep" style="left:763px;top:592px;width:1px;height:16px"></div>
<span class="t dl" style="left:773px;top:595px">appservice (#1)</span>
<svg style="left:892px;top:597px" width="9" height="7" viewBox="0 0 9 7"><path d="M0 0H9L4.5 7Z" fill="#9aa0a6"/></svg>
<div class="sep" style="left:910px;top:592px;width:1px;height:16px"></div>
<svg style="left:920px;top:595px" width="18" height="11" viewBox="0 0 18 11"><path d="M0.5 5.5C3 1.5 6 0.5 9 0.5S15 1.5 17.5 5.5C15 9.5 12 10.5 9 10.5S3 9.5 0.5 5.5Z" fill="#9aa0a6"/><circle cx="9" cy="5.5" r="3" fill="#292a2d"/><circle cx="9" cy="5.5" r="1.6" fill="#9aa0a6"/></svg>
<div class="sep" style="left:947px;top:592px;width:1px;height:16px"></div>
<div style="left:954px;top:590px;width:98px;height:23px;border:1px solid #5f6368;background:#202124"></div>
<span class="t" style="left:959px;top:596px;font-size:12px;color:#bdc1c6">Filter</span>
<span class="t dl" style="left:1061px;top:595px;font-size:11.6px">Default levels</span>
<svg style="left:1135px;top:597px" width="8" height="7" viewBox="0 0 8 7"><path d="M0 0H8L4 7Z" fill="#9aa0a6"/></svg>
<div class="sep" style="left:1157px;top:592px;width:1px;height:16px"></div>
<span class="t" style="left:1167px;top:595px;font-size:12px;color:#9aa0a6">2 hidden</span>
<svg style="left:1225px;top:592px" width="15" height="15" viewBox="0 0 24 24"><path fill="#9aa0a6" d="M19.4 13c.04-.32.06-.66.06-1s-.02-.68-.07-1l2.16-1.68a.5.5 0 0 0 .12-.64l-2.05-3.55a.5.5 0 0 0-.62-.22l-2.55 1.03a7.7 7.7 0 0 0-1.730-1L14.34 2.4a.5.5 0 0 0-.5-.4H9.74a.5.5 0 0 0-.5.42L8.86 5.14c-.63.26-1.2.6-1.73 1L4.58 5.1a.5.5 0 0 0-.62.22L1.9 8.87a.5.5 0 0 0 .12.64L4.18 11.2c-.05.32-.08.66-.08 1s.03.68.08 1l-2.160 1.68a.5.5 0 0 0-.12.64l2.05 3.55c.13.22.39.3.62.22l2.55-1.03c.53.4 1.1.74 1.73 1l.38 2.72c.05.24.26.42.5.42h4.1c.25 0 .46-.18.5-.42l.38-2.720c.63-.26 1.2-.6 1.73-1l2.55 1.03c.23.09.49 0 .62-.22l2.05-3.55a.5.5 0 0 0-.12-.64zM12 15.5A3.5 3.5 0 1 1 12 8.5a3.5 3.5 0 0 1 0 7z"/></svg>
<div class="sep" style="left:700px;top:613px;width:549px;height:1px"></div>
<div style="left:700px;top:614px;width:535px;height:261px;background:#332b00;overflow:hidden">
<span class="t mono ml" style="left:25px;top:-5px">["titleNView"]<span class="cj">、无效的</span> page.json ["titleNView"]<span class="cj">、无效的</span> page.json</span>
<span class="t mono ml" style="left:25px;top:9px">["titleNView"]<span class="cj">、无效的</span> page.json ["titleNView"]<span class="cj">、无效的</span> page.json</span>
<span class="t mono ml" style="left:25px;top:23px">["titleNView"]<span class="cj">、无效的</span> page.json ["titleNView"]<span class="cj">、无效的</span> page.json</span>
<span class="t mono ml" style="left:25px;top:37px">["titleNView"]<span class="cj">、无效的</span> page.json ["titleNView"]<span class="cj">、无效的</span> page.json</span>
<span class="t mono ml" style="left:25px;top:51px">["titleNView"]<span class="cj">、无效的</span> page.json ["titleNView"]<span class="cj">、无效的</span> page.json</span>
<span class="t mono ml" style="left:25px;top:65px">["titleNView"]<span class="cj">、无效的</span> page.json ["titleNView"]<span class="cj">、无效的</span> page.json</span>
<span class="t mono ml" style="left:25px;top:79px">["titleNView"]<span class="cj">、无效的</span> page.json ["titleNView"]<span class="cj">、无效的</span> page.json</span>
<span class="t mono ml" style="left:25px;top:93px">["titleNView"]<span class="cj">、无效的</span> page.json ["titleNView"]<span class="cj">、无效的</span> page.json</span>
<span class="t mono ml" style="left:25px;top:107px">["titleNView"]<span class="cj">、无效的</span> page.json ["titleNView"]<span class="cj">、无效的</span> page.json</span>
<span class="t mono ml" style="left:25px;top:121px">["titleNView"]<span class="cj">、无效的</span> page.json ["titleNView"]<span class="cj">、无效的</span> page.json</span>
<span class="t mono ml" style="left:25px;top:135px">["titleNView"]<span class="cj">、无效的</span> page.json ["titleNView"]<span class="cj">、无效的</span> page.json</span>
<span class="t mono ml" style="left:25px;top:149px">["titleNView"]<span class="cj">、无效的</span> page.json ["titleNView"]<span class="cj">、无效的</span> page.json</span>
<span class="t mono ml" style="left:25px;top:163px">["titleNView"]<span class="cj">、无效的</span> page.json ["titleNView"]<span class="cj">、无效的</span> page.json</span>
<span class="t mono ml" style="left:25px;top:177px">["titleNView"]<span class="cj">、无效的</span> page.json ["titleNView"]<span class="cj">、无效的</span> page.json</span>
<span class="t mono ml" style="left:25px;top:191px">["titleNView"]<span class="cj">、无效的</span> page.json ["titleNView"]<span class="cj">、无效的</span> page.json</span>
<span class="t mono ml" style="left:25px;top:205px">["titleNView"]<span class="cj">、无效的</span> page.json ["titleNView"]<span class="cj">、无效的</span> page.json</span>
<span class="t mono ml" style="left:25px;top:219px">["titleNView"]<span class="cj">、无效的</span> page.json ["titleNView"]<span class="cj">、无效的</span> page.json</span>
<span class="t mono ml" style="left:25px;top:233px">["titleNView"]<span class="cj">、无效的</span> page.json ["titleNView"]<span class="cj">、无效的</span> page.json</span>
<span class="t mono ml" style="left:25px;top:247px">["titleNView"]</span>
</div>
<div style="left:700px;top:875px;width:535px;height:1px;background:#5c4d00"></div>
<span class="t mono ml" style="left:725px;top:881px;color:#e8e8e8">[system] Launch Time: 10568 ms</span>
<span class="t mono ml" style="right:43px;top:881px;color:#cfcfcf;font-weight:normal;text-decoration:underline">WAServiceMainContext…114939817&amp;v=3.4.3:1</span>
<span class="t mono ml" style="left:725px;top:901px;color:#e8e8e8">/pages/index/index</span>
<span class="t mono ml" style="right:43px;top:901px;color:#cfcfcf;font-weight:normal;text-decoration:underline">dp-tabbar.js? [sm]:1</span>
<span class="t mono ml" style="left:725px;top:921px;color:#9980ff">0</span>
<span class="t mono ml" style="right:43px;top:921px;color:#cfcfcf;font-weight:normal;text-decoration:underline">dp-tabbar.js? [sm]:1</span>
<div style="left:700px;top:895px;width:535px;height:1px;background:#3a3a3a"></div>
<div style="left:700px;top:915px;width:535px;height:1px;background:#3a3a3a"></div>
<div style="left:700px;top:934px;width:535px;height:1px;background:#3a3a3a"></div>
<svg style="left:709px;top:940px" width="6" height="9" viewBox="0 0 6 9"><path d="M1 1L4.5 4.5L1 8" stroke="#4d8bf5" stroke-width="1.5" fill="none"/></svg>
<div style="left:1235px;top:614px;width:14px;height:358px;background:#262626;border-left:1px solid #2c2c2c"></div>
<div style="left:1236px;top:914px;width:13px;height:58px;background:#2e2e2e;border:1px solid #3c3c3c;border-right:0;border-radius:0 0 0 3px"></div>
<div style="left:325px;top:92px;width:600px;height:221px;background:#333;border-radius:0 0 3px 3px"></div>
<span class="t" style="left:355px;top:118px;font-size:12px;color:#d4d4d4">版本号</span>
<div style="left:447px;top:112px;width:448px;height:25px;border-radius:2px;background:#444"></div>
<span class="t" style="left:457px;top:117px;font-size:13px;color:#8a8a8a">1.0.0（推荐)</span>
<span class="t" style="left:447px;top:145px;font-size:12px;color:#8a8a8a">仅限字母、数字、小数点</span>
<span class="t" style="left:355px;top:177px;font-size:12px;color:#d4d4d4">项目备注</span>
<div style="left:447px;top:171px;width:448px;height:70px;border-radius:2px;background:#444"></div>
<span class="t" style="left:457px;top:177px;font-size:12.5px;letter-spacing:-0.45px;color:#8a8a8a;word-spacing:2px"><span class="cq">小丸子</span> <span class="cq">在</span> 2024<span class="cq">年</span>4<span class="cq">月</span>26<span class="cq">日下午</span>3<span class="cq">点</span>04<span class="cq">分</span> <span class="cq">提交上传</span></span>
<div style="left:737px;top:271px;width:74px;height:22px;border-radius:3px;background:#4a4a4a"></div>
<span class="t" style="left:761px;top:276px;font-size:12px;color:#e4e4e4">取消</span>
<div style="left:821px;top:271px;width:74px;height:22px;border-radius:3px;background:#07c160"></div>
<span class="t" style="left:846px;top:276px;font-size:12px;color:#fff">上传</span>
<svg style="left:0;top:0" width="1250" height="1000" viewBox="0 0 1250 1000"><g fill="none" stroke="#fd1b12" stroke-width="3.3"><rect x="411" y="102" width="354" height="133" rx="3.5"/><rect x="826.3" y="257.3" width="80.4" height="44" rx="3.5"/><rect x="950.1" y="32.2" width="57.5" height="49.4" rx="3.5"/></g></svg>
<svg style="left:900px;top:140px" width="120" height="120" viewBox="0 0 120 120"><path d="M108.7 8.9L108.9 9.1L27.3 98.0L24.4 95.2Z M18 104.4L21 92.4L30.6 100.8Z" fill="#fd1b12"/></svg>
</div></body></html>
